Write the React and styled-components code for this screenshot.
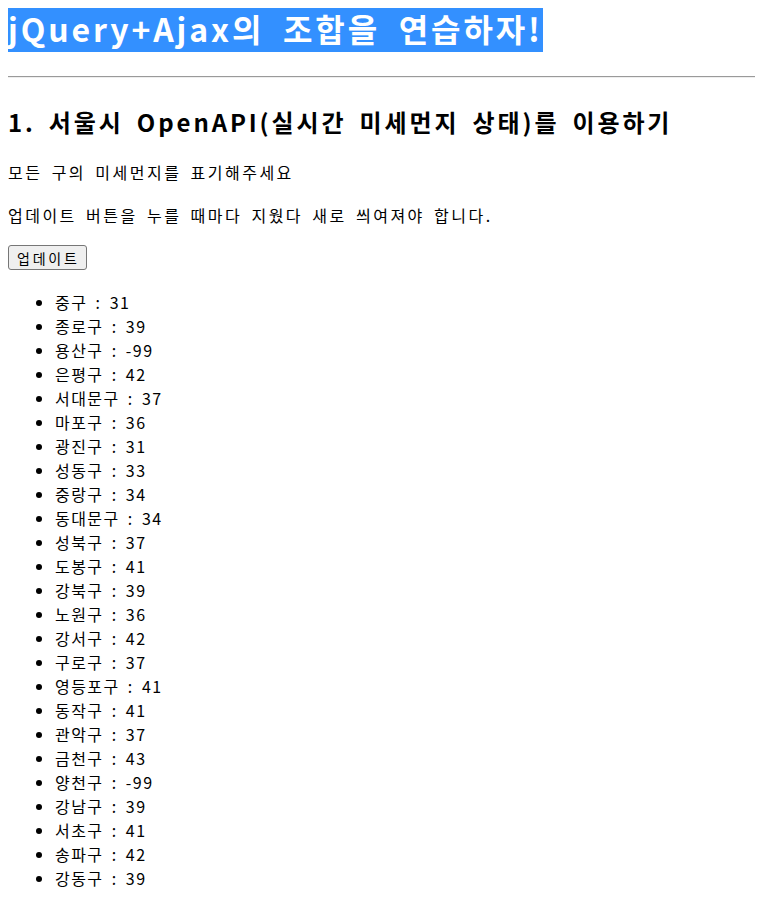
import React from "react";
import styled, { createGlobalStyle } from "styled-components";

const GlobalStyle = createGlobalStyle`
    body{
        margin: 8px;
        background: #fff;
        color: #000;
        font-family: "Noto Sans CJK KR", "Noto Sans", sans-serif;
        font-size: 16px;
        overflow: hidden;
    }
`

const Title = styled.h1`
    margin: -3px 0 0;
    font-size: 32px;
    font-weight: 700;
    line-height: 47px;
    letter-spacing: 0.09em;
    word-spacing: 0.27em;

    & > span{
        display: inline-block;
        background-color: #3390ff;
        color: white;
    }
`

const Divider = styled.hr`
    margin: 24px -8px 0 0;
    border: none;
    border-top: 1px solid #9a9a9a;
    border-bottom: 1px solid #eeeeee;
`

const SubTitle = styled.h2`
    margin: 28px 0 0;
    font-size: 24px;
    font-weight: 700;
    line-height: 32px;
    letter-spacing: 0.12em;
    word-spacing: 0.2em;
`

const Desc = styled.p`
    margin: ${props => props.gap}px 0 0;
    line-height: 24px;
    letter-spacing: 0.155em;
    word-spacing: 0.2em;
`

const UpdateButton = styled.button`
    display: block;
    margin-top: 18px;
    height: 25px;
    padding: 0 6px 0 8px;
    font-family: inherit;
    font-size: 14px;
    letter-spacing: 0.2em;
    background-color: #efefef;
    border: 1px solid #767676;
    border-radius: 3px;
    color: #000;
`

const DustList = styled.ul`
    margin: 20px 0 0;
    padding-left: 47px;

    & > li{
        line-height: 24px;
        letter-spacing: 0.09em;
        word-spacing: 0.2em;
    }
`

const dust = [
    ["중구", 31], ["종로구", 39], ["용산구", -99], ["은평구", 42], ["서대문구", 37],
    ["마포구", 36], ["광진구", 31], ["성동구", 33], ["중랑구", 34], ["동대문구", 34],
    ["성북구", 37], ["도봉구", 41], ["강북구", 39], ["노원구", 36], ["강서구", 42],
    ["구로구", 37], ["영등포구", 41], ["동작구", 41], ["관악구", 37], ["금천구", 43],
    ["양천구", -99], ["강남구", 39], ["서초구", 41], ["송파구", 42], ["강동구", 39],
]

const App = () => {
    return (
        <>
            <GlobalStyle />
            <Title><span>jQuery+Ajax의 조합을 연습하자!</span></Title>
            <Divider />
            <SubTitle>1. 서울시 OpenAPI(실시간 미세먼지 상태)를 이용하기</SubTitle>
            <Desc gap={22}>모든 구의 미세먼지를 표기해주세요</Desc>
            <Desc gap={19}>업데이트 버튼을 누를 때마다 지웠다 새로 씌여져야 합니다.</Desc>
            <UpdateButton>업데이트</UpdateButton>
            <DustList>
                {dust.map(([gu, value]) => (
                    <li key={gu}>{gu} : {value}</li>
                ))}
            </DustList>
        </>
    )
}

export default App
